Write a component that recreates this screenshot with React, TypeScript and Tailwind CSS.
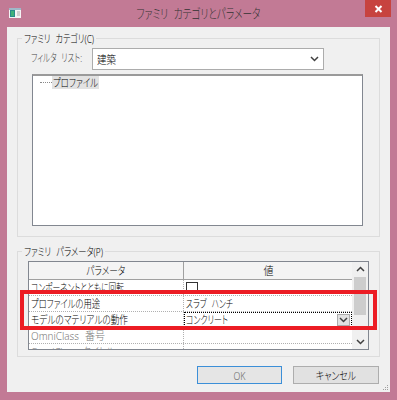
import React, { useLayoutEffect, useRef, useState, useEffect } from "react";

const Chevron = ({ up = false }: { up?: boolean }) => (
  <svg width="9" height="6" viewBox="0 0 9 6">
    <path
      d={up ? "M1 5 L4.5 1.5 L8 5" : "M1 1 L4.5 4.5 L8 1"}
      fill="none"
      stroke="#404040"
      strokeWidth="1.5"
    />
  </svg>
);

// Text condensed to the width it has in the reference (Meiryo UI is narrower
// than the installed CJK face); the factor is measured while the page runs.
function T({
  children,
  w,
  center = false,
}: {
  children: React.ReactNode;
  w: number;
  center?: boolean;
}) {
  const ref = useRef<HTMLSpanElement>(null);
  const [s, setS] = useState<number | null>(null);
  const measure = () => {
    if (!ref.current) return;
    const prev = ref.current.style.transform;
    ref.current.style.transform = "none";
    const n = ref.current.getBoundingClientRect().width;
    ref.current.style.transform = prev;
    if (n > 0) setS(Math.min(1.2, w / n));
  };
  useLayoutEffect(measure, [w]);
  useEffect(() => {
    if (document.fonts) document.fonts.ready.then(measure);
  }, [w]);
  return (
    <span
      ref={ref}
      className={`inline-block whitespace-nowrap [word-spacing:4px] ${
        center ? "origin-center" : "origin-left"
      }`}
      style={s ? { transform: `scaleX(${s})` } : undefined}
    >
      {children}
    </span>
  );
}

function Row({
  name,
  nw,
  value,
  gray = false,
}: {
  name: string;
  nw: number;
  value?: React.ReactNode;
  gray?: boolean;
}) {
  return (
    <div className="flex h-[16px] shrink-0 border-b border-dotted border-[#b0b0b0]">
      <div
        className={`w-[155px] shrink-0 border-r border-dotted border-[#b0b0b0] pl-[2px] leading-[15px] whitespace-nowrap overflow-hidden ${
          gray ? "text-[#7a7a7a]" : "text-black"
        }`}
      >
        <T w={nw}>{name}</T>
      </div>
      <div className="flex-1 leading-[15px] whitespace-nowrap overflow-hidden">{value}</div>
    </div>
  );
}

export default function App() {
  return (
    <div className="relative w-[397px] h-[400px] bg-[#c27a95] flex flex-col font-['Noto_Sans','Noto_Sans_CJK_JP',sans-serif] [font-feature-settings:'palt'] font-light text-[11px] text-black overflow-hidden">
      {/* Title bar */}
      <div className="h-[27px] shrink-0 grid grid-cols-[1fr_auto_1fr]">
        <div className="pl-[9px] pt-[8px]">
          <svg width="12" height="10" viewBox="0 0 12 10">
            <rect x="0" y="0" width="12" height="10" fill="#f4f4f4" />
            <rect x="0" y="0" width="12" height="2" fill="#9fb8c8" />
            <rect x="1" y="2" width="5" height="7" fill="#2a8a8a" />
            <rect x="2" y="3" width="3" height="5" fill="#3fb07a" />
            <rect x="8" y="3" width="3" height="5" fill="#d0d0d0" />
          </svg>
        </div>
        <div className="pt-[4px] text-[13px] leading-[18px] text-[#333] text-center">
          <T center w={124}>
            ファミリ カテゴリとパラメータ
          </T>
        </div>
        <div className="flex justify-end pr-[6px]">
          <div className="w-[26px] h-[17px] bg-[#c7433f] flex items-center justify-center">
            <svg width="9" height="8" viewBox="0 0 9 8">
              <path d="M1.5 1 L7.5 7 M7.5 1 L1.5 7" stroke="#fff" strokeWidth="2" />
            </svg>
          </div>
        </div>
      </div>

      {/* Client area */}
      <div className="relative mx-[7px] h-[365px] shrink-0 bg-[#f0f0f0] flex flex-col">
        {/* Group 1 */}
        <fieldset className="mt-[5px] mx-[10px] h-[205px] border border-[#dcdcdc] p-0 min-w-0">
          <legend className="ml-[4px] px-[2px] w-[74px] leading-[13px]">
            <T w={70}>ファミリ カテゴリ(C)</T>
          </legend>
          <div className="flex items-start mt-[3px] pl-[13px]">
            <div className="w-[61px] pt-[3px] leading-[13px] text-[#444]">
              <T w={51}>フィルタ リスト:</T>
            </div>
            <div className="w-[232px] h-[22px] bg-white border border-[#acacac] flex items-center justify-between pl-[4px] pr-[4px]">
              <span className="leading-[13px]">
                <T w={19}>建築</T>
              </span>
              <Chevron />
            </div>
          </div>
          <div className="mt-[4px] ml-[14px] w-[331px] h-[152px] bg-white border border-[#828790] border-t-2 border-t-[#9a9a9a]">
            <div className="flex items-center h-[13px]">
              <div className="ml-[7px] w-[12px] border-t border-dotted border-[#8a8a8a]" />
              <div className="bg-[#e2e2e2] w-[47px] pl-[1px] leading-[13px] overflow-hidden">
                <T w={45}>プロファイル</T>
              </div>
            </div>
          </div>
        </fieldset>

        {/* Group 2 */}
        <fieldset className="mt-[8px] mx-[10px] h-[112px] border border-[#dcdcdc] p-0 min-w-0">
          <legend className="ml-[4px] px-[2px] w-[83px] leading-[13px]">
            <T w={79}>ファミリ パラメータ(P)</T>
          </legend>
          <div className="mt-[3px] ml-[10px] w-[341px] h-[89px] bg-white border border-[#828790] flex overflow-hidden">
            <div className="flex-1 flex flex-col min-w-0">
              <div className="h-[18px] shrink-0 flex bg-[#f4f4f4] border-b border-[#a0a0a0]">
                <div className="w-[155px] shrink-0 border-r border-[#a0a0a0] text-center leading-[17px]">
                  <T center w={39}>
                    パラメータ
                  </T>
                </div>
                <div className="flex-1 text-center leading-[17px]">
                  <T center w={10}>
                    値
                  </T>
                </div>
              </div>
              <Row
                name="コンポーネントとともに回転"
                nw={93}
                value={<div className="ml-[2px] mt-[2px] w-[12px] h-[12px] border border-[#333] bg-white" />}
              />
              <Row
                name="プロファイルの用途"
                nw={69}
                value={
                  <span className="pl-[2px]">
                    <T w={47}>スラブ ハンチ</T>
                  </span>
                }
              />
              <Row
                name="モデルのマテリアルの動作"
                nw={97}
                value={
                  <div className="h-[15px] border border-dotted border-black flex items-center justify-between">
                    <span className="pl-[1px] leading-[13px]">
                      <T w={42}>コンクリート</T>
                    </span>
                    <div className="w-[13px] h-[12px] mr-[1px] bg-[#e1e1e1] border border-[#acacac] flex items-center justify-center">
                      <Chevron />
                    </div>
                  </div>
                }
              />
              <Row name="OmniClass 番号" nw={74} gray />
              <Row name="OmniClass タイトル" nw={84} gray />
            </div>
            {/* Scrollbar */}
            <div className="w-[16px] shrink-0 bg-[#f0f0f0] flex flex-col items-center">
              <div className="h-[14px] flex items-center justify-center">
                <Chevron up />
              </div>
              <div className="flex-1 w-full px-[2px]">
                <div className="mt-[1px] h-[38px] bg-[#cdcdcd]" />
              </div>
              <div className="h-[14px] flex items-center justify-center">
                <Chevron />
              </div>
            </div>
          </div>
        </fieldset>

        {/* Buttons */}
        <div className="mt-[9px] flex justify-end gap-[11px] pr-[11px]">
          <div className="w-[85px] h-[18px] bg-[#e5e5e5] border border-[#3c8fd8] flex items-center justify-center text-[#6a6a6a] leading-[13px]">
            <T center w={12}>
              OK
            </T>
          </div>
          <div className="w-[86px] h-[18px] bg-[#e1e1e1] border border-[#adadad] flex items-center justify-center leading-[13px]">
            <T center w={40}>
              キャンセル
            </T>
          </div>
        </div>

        {/* resize grip */}
        <div className="absolute right-[2px] bottom-[2px] grid grid-cols-3 gap-[1px]">
          <span className="w-[1px] h-[1px]" />
          <span className="w-[1px] h-[1px]" />
          <span className="w-[1px] h-[1px] bg-[#a0a0a0]" />
          <span className="w-[1px] h-[1px]" />
          <span className="w-[1px] h-[1px] bg-[#a0a0a0]" />
          <span className="w-[1px] h-[1px] bg-[#a0a0a0]" />
          <span className="w-[1px] h-[1px] bg-[#a0a0a0]" />
          <span className="w-[1px] h-[1px] bg-[#a0a0a0]" />
          <span className="w-[1px] h-[1px] bg-[#a0a0a0]" />
        </div>
      </div>

      {/* red annotation */}
      <div className="absolute left-[20px] top-[290px] w-[357px] h-[40px] border-4 border-[#ec1c24]" />
    </div>
  );
}
